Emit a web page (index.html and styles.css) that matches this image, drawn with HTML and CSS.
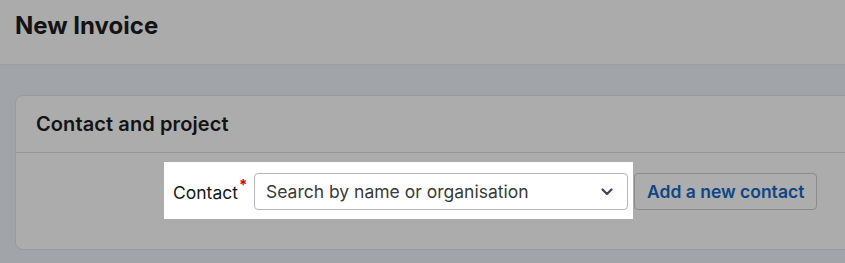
FILE: index.html
```html
<!DOCTYPE html>
<html lang="en">
<head>
<meta charset="utf-8">
<title>New Invoice</title>
<link rel="stylesheet" href="styles.css">
</head>
<body>
<header class="page-header">
  <h1 class="page-title">New Invoice</h1>
</header>
<main class="page-main">
  <section class="card">
    <div class="card-header">
      <h2 class="card-title">Contact and project</h2>
    </div>
    <div class="card-body">
      <div class="field-row">
        <div class="spotlight">
          <label class="field-label">Contact<span class="required">*</span></label>
          <div class="select">
            <span class="select-placeholder">Search by name or organisation</span>
            <svg class="chevron" width="12" height="8" viewBox="0 0 12 8" aria-hidden="true">
              <path d="M1.5 1.5 L6 6 L10.5 1.5" fill="none" stroke="currentColor" stroke-width="2.2" stroke-linecap="round" stroke-linejoin="round"/>
            </svg>
          </div>
        </div>
        <button class="btn-secondary" type="button">Add a new contact</button>
      </div>
    </div>
  </section>
</main>
</body>
</html>
```

FILE: styles.css
```css
* { box-sizing: border-box; }
html, body {
  margin: 0;
  padding: 0;
  height: 100%;
}
body {
  font-family: Inter, "Noto Sans", sans-serif;
  background: #a1a4a9;
  color: #131313;
  overflow: hidden;
}
.page-header {
  height: 65px;
  background: #ababab;
  border-bottom: 1px solid #9c9ea2;
  padding: 11px 15px 0;
}
.page-title {
  margin: 0;
  font-size: 24px;
  font-weight: 700;
  line-height: 30px;
}
.page-main {
  padding: 30px 15px 0;
  overflow: hidden;
}
.card {
  background: #acacac;
  border: 1px solid #9a9a9a;
  border-radius: 8px;
  margin-right: -120px;
  height: 155px;
}
.card-header {
  height: 57px;
  border-bottom: 1px solid #979797;
  padding: 15px 20px 0;
}
.card-title {
  margin: 0;
  font-size: 20px;
  font-weight: 600;
  line-height: 26px;
  letter-spacing: 0.1px;
}
.card-body {
  padding: 9px 0 0 148px;
}
.field-row {
  display: flex;
  align-items: flex-start;
}
.spotlight {
  display: flex;
  align-items: center;
  background: #ffffff;
  padding: 11px 5px 9px 9px;
  height: 57px;
}
.field-label {
  flex: none;
  width: 81px;
  font-size: 17.5px;
  color: #161616;
  margin-top: 2px;
  white-space: nowrap;
}
.required {
  position: relative;
  top: -9px;
  margin-left: 1px;
  color: #d0021b;
  font-size: 15px;
  font-weight: 700;
}
.select {
  flex: none;
  width: 374px;
  height: 37px;
  border: 1px solid #b3b7bc;
  border-radius: 4px;
  display: flex;
  align-items: center;
  justify-content: space-between;
  padding: 0 14px 0 11px;
}
.select-placeholder {
  font-size: 17.5px;
  color: #3a3a3a;
}
.chevron {
  color: #3d4650;
}
.btn-secondary {
  margin-top: 11px;
  margin-left: 1px;
  height: 37px;
  width: 183px;
  padding: 0 12px;
  background: #adadad;
  border: 1px solid #8c8c8c;
  border-radius: 4px;
  font-family: Inter, "Noto Sans", sans-serif;
  font-size: 17.5px;
  font-weight: 600;
  color: #0d4684;
  white-space: nowrap;
}
```
